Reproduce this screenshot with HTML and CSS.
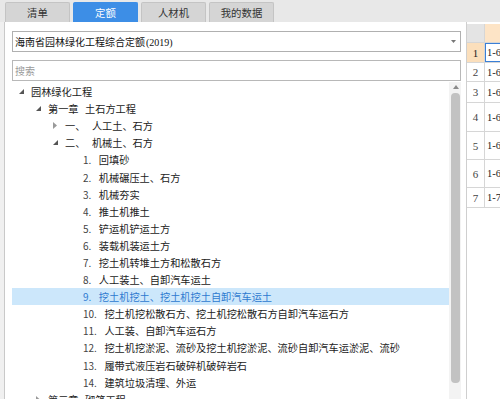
FILE: index.html
```html
<!DOCTYPE html>
<html>
<head>
<meta charset="utf-8">
<link rel="stylesheet" href="styles.css">
</head>
<body>
<div class="app">
  <div class="tabbar">
    <div class="tab">清单</div>
    <div class="tab active">定额</div>
    <div class="tab">人材机</div>
    <div class="tab">我的数据</div>
  </div>
  <div class="main">
    <div class="left">
      <div class="select">
        <span class="sel-text">海南省园林绿化工程综合定额<span class="yr">(2019)</span></span>
        <svg class="caret" width="5" height="3" viewBox="0 0 5 3"><polygon points="0,0 5,0 2.5,3" fill="#777"/></svg>
      </div>
      <div class="search">搜索</div>
      <div class="treewrap">
        <div class="tree">
          <div class="row l0"><span class="arw"><svg width="5" height="5" viewBox="0 0 5 5"><polygon points="5,0 5,5 0,5" fill="#555"/></svg></span><span>园林绿化工程</span></div>
          <div class="row l1"><span class="arw"><svg width="5" height="5" viewBox="0 0 5 5"><polygon points="5,0 5,5 0,5" fill="#555"/></svg></span><span class="ord">第一章</span><span>土石方工程</span></div>
          <div class="row l2"><span class="arw"><svg width="4" height="7" viewBox="0 0 4 7"><polygon points="0,0 4,3.5 0,7" fill="#9a9a9a"/></svg></span><span class="ord">一、</span><span>人工土、石方</span></div>
          <div class="row l2"><span class="arw"><svg width="5" height="5" viewBox="0 0 5 5"><polygon points="5,0 5,5 0,5" fill="#555"/></svg></span><span class="ord">二、</span><span>机械土、石方</span></div>
          <div class="row l3"><span class="arw"></span><span class="num">1.</span><span>回填砂</span></div>
          <div class="row l3"><span class="arw"></span><span class="num">2.</span><span>机械碾压土、石方</span></div>
          <div class="row l3"><span class="arw"></span><span class="num">3.</span><span>机械夯实</span></div>
          <div class="row l3"><span class="arw"></span><span class="num">4.</span><span>推土机推土</span></div>
          <div class="row l3"><span class="arw"></span><span class="num">5.</span><span>铲运机铲运土方</span></div>
          <div class="row l3"><span class="arw"></span><span class="num">6.</span><span>装载机装运土方</span></div>
          <div class="row l3"><span class="arw"></span><span class="num">7.</span><span>挖土机转堆土方和松散石方</span></div>
          <div class="row l3"><span class="arw"></span><span class="num">8.</span><span>人工装土、自卸汽车运土</span></div>
          <div class="row l3 sel"><span class="arw"></span><span class="num">9.</span><span>挖土机挖土、挖土机挖土自卸汽车运土</span></div>
          <div class="row l3"><span class="arw"></span><span class="num">10.</span><span>挖土机挖松散石方、挖土机挖松散石方自卸汽车运石方</span></div>
          <div class="row l3"><span class="arw"></span><span class="num">11.</span><span>人工装、自卸汽车运石方</span></div>
          <div class="row l3"><span class="arw"></span><span class="num">12.</span><span>挖土机挖淤泥、流砂及挖土机挖淤泥、流砂自卸汽车运淤泥、流砂</span></div>
          <div class="row l3"><span class="arw"></span><span class="num">13.</span><span>履带式液压岩石破碎机破碎岩石</span></div>
          <div class="row l3"><span class="arw"></span><span class="num">14.</span><span>建筑垃圾清理、外运</span></div>
          <div class="row l1"><span class="arw"><svg width="4" height="7" viewBox="0 0 4 7"><polygon points="0,0 4,3.5 0,7" fill="#9a9a9a"/></svg></span><span class="ord">第二章</span><span>砌筑工程</span></div>
        </div>
        <div class="vscroll">
          <svg class="up" width="6" height="4" viewBox="0 0 6 4"><polygon points="0,4 6,4 3,0" fill="#8a8a8a"/></svg>
          <div class="thumb"></div>
        </div>
      </div>
    </div>
    <div class="right">
      <div class="grow head"><div class="rn"></div><div class="cell"></div></div>
      <div class="grow cur h20"><div class="rn">1</div><div class="cell">1-64</div></div>
      <div class="grow h19"><div class="rn">2</div><div class="cell">1-65</div></div>
      <div class="grow h21"><div class="rn">3</div><div class="cell">1-66</div></div>
      <div class="grow h29"><div class="rn">4</div><div class="cell">1-67</div></div>
      <div class="grow h28"><div class="rn">5</div><div class="cell">1-68</div></div>
      <div class="grow h28"><div class="rn">6</div><div class="cell">1-69</div></div>
      <div class="grow h20"><div class="rn">7</div><div class="cell">1-70</div></div>
    </div>
  </div>
</div>
</body>
</html>
```

FILE: styles.css
```css
html, body {
  margin: 0;
  padding: 0;
}
body {
  background: #f0f0f0;
  font-family: "Noto Sans CJK SC", "Noto Sans", sans-serif;
  font-size: 10.2px;
  color: #222;
}
.app {
  width: 500px;
  height: 399px;
  overflow: hidden;
}
.tabbar {
  height: 22px;
  box-sizing: border-box;
  background: #e8e8e8;
  display: flex;
  align-items: flex-end;
  gap: 3px;
  padding-left: 5px;
}
.tab {
  width: 65px;
  height: 20px;
  box-sizing: border-box;
  background: #d5d5d5;
  border: 1px solid #c4c4c4;
  border-bottom: none;
  border-radius: 2px 2px 0 0;
  display: flex;
  align-items: center;
  justify-content: center;
  color: #333;
  font-size: 10.4px;
}
.tab.active {
  background: #3d8ee6;
  border-color: #3d8ee6;
  color: #fff;
}
.main {
  display: flex;
  height: 377px;
}
.left {
  margin-left: 4px;
  border-left: 1px solid #c9c9c9;
  background: #fff;
  width: 462px;
  padding: 9px 5px 0 7px;
  box-sizing: border-box;
  display: flex;
  flex-direction: column;
}
.select {
  height: 21px;
  box-sizing: border-box;
  border: 1px solid #b0b0b0;
  display: flex;
  align-items: center;
  justify-content: space-between;
  padding: 0 4px 0 2px;
  color: #111;
  font-size: 10px;
}
.yr {
  font-family: "Liberation Serif", serif;
  font-size: 10px;
  margin-left: 1px;
}
.caret {
  display: block;
}
.search {
  margin-top: 8px;
  height: 21px;
  box-sizing: border-box;
  border: 1px solid #b8b8b8;
  display: flex;
  align-items: center;
  padding-left: 2px;
  color: #9a9a9a;
  font-size: 10px;
}
.treewrap {
  margin-top: 1px;
  flex: 1;
  display: flex;
  overflow: hidden;
}
.tree {
  width: 438px;
  padding-top: 1px;
  overflow: hidden;
}
.row {
  height: 17.1px;
  display: flex;
  align-items: center;
  white-space: nowrap;
}
.row.l0 { padding-left: 6px; }
.row.l1 { padding-left: 23px; }
.row.l2 { padding-left: 40px; }
.row.l3 { padding-left: 58px; }
.arw {
  width: 13px;
  flex: none;
  display: flex;
  align-items: center;
}
.arw svg {
  display: block;
  margin-left: 1px;
}
.ord {
  margin-right: 6.5px;
}
.num {
  margin-right: 7.5px;
  color: #444;
  font-size: 10px;
}
.row.sel {
  background: #cce7fb;
  color: #2e7ad0;
}
.row.sel .num {
  color: #2e7ad0;
}
.vscroll {
  width: 12px;
  background: #f3f3f3;
  display: flex;
  flex-direction: column;
  align-items: center;
}
.up {
  display: block;
  margin-top: 3px;
  margin-left: 1px;
}
.thumb {
  margin-top: 4px;
  width: 9px;
  height: 290px;
  border-radius: 4px;
  background: #c2c2c2;
  margin-left: 1px;
}
.right {
  flex: 1;
  border-left: 1px solid #cfcfcf;
  background: #fff;
  padding-top: 2px;
  overflow: hidden;
}
.grow {
  display: flex;
  box-sizing: border-box;
  border-bottom: 1px solid #d6d6d6;
}
.grow.head { height: 19px; border-bottom: 1px solid #d6d6d6; }
.h19 { height: 19px; }
.h20 { height: 20px; }
.h21 { height: 21px; }
.h28 { height: 28px; }
.h29 { height: 29px; }
.rn {
  width: 18px;
  flex: none;
  box-sizing: border-box;
  border-right: 1px solid #d6d6d6;
  display: flex;
  align-items: center;
  justify-content: center;
  font-family: "Liberation Serif", serif;
  font-size: 11px;
  color: #444;
}
.cell {
  flex: 1;
  display: flex;
  align-items: center;
  padding-left: 2px;
  white-space: nowrap;
  font-family: "Liberation Serif", serif;
  font-size: 10.5px;
  color: #222;
}
.head .rn { background: #e4e4e4; }
.head .cell { background: #fde4c6; }
.cur .rn { background: #fbdfbc; color: #222; }
.cur .cell { box-shadow: inset 1px 0 0 #3a7fd6, inset 0 1px 0 #3a7fd6, inset 0 -1px 0 #3a7fd6; }
```
